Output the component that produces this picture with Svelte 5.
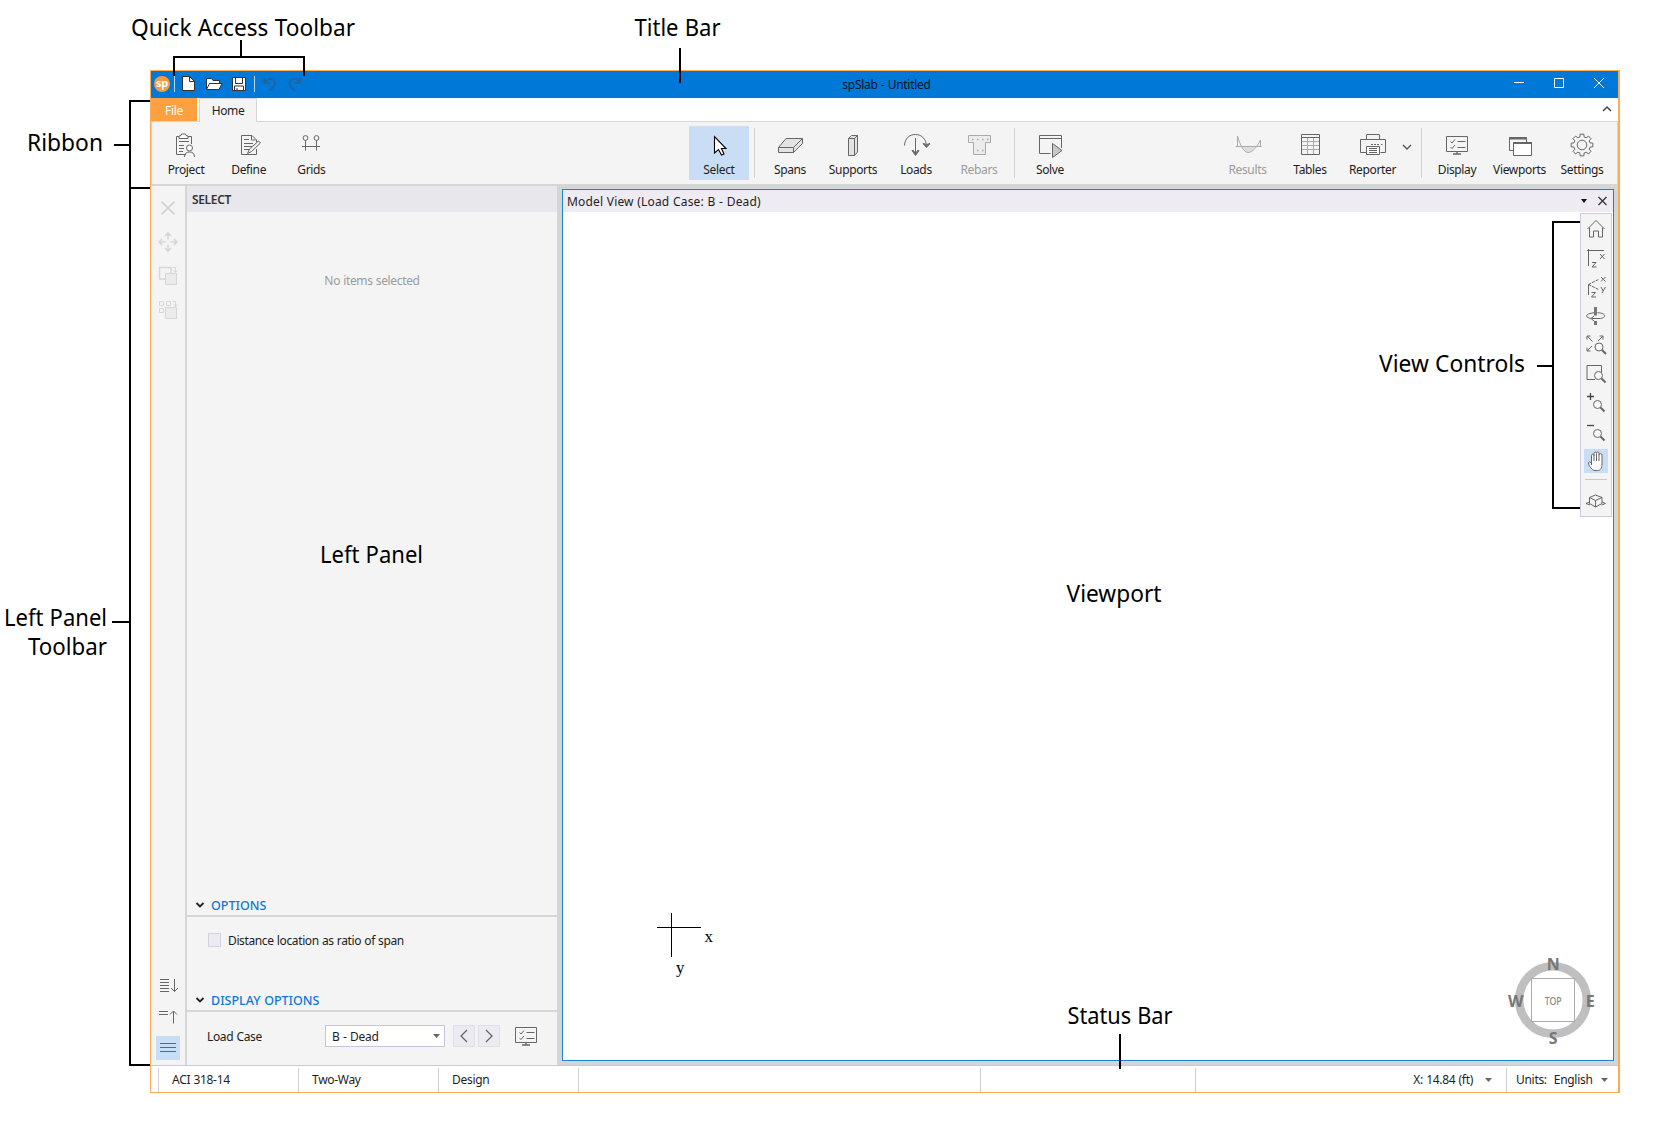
<script lang="ts">
	type Tool = { label: string; icon: string; active?: boolean; disabled?: boolean };

	const fileTools: Tool[] = [
		{ label: 'Project', icon: 'project' },
		{ label: 'Define', icon: 'define' },
		{ label: 'Grids', icon: 'grids' }
	];

	const modelTools: Tool[] = [
		{ label: 'Spans', icon: 'spans' },
		{ label: 'Supports', icon: 'supports' },
		{ label: 'Loads', icon: 'loads' },
		{ label: 'Rebars', icon: 'rebars', disabled: true }
	];

	const outputTools: Tool[] = [
		{ label: 'Results', icon: 'results', disabled: true },
		{ label: 'Tables', icon: 'tables' },
		{ label: 'Reporter', icon: 'reporter' }
	];

	const viewTools: Tool[] = [
		{ label: 'Display', icon: 'display' },
		{ label: 'Viewports', icon: 'viewports' },
		{ label: 'Settings', icon: 'settings' }
	];

	const viewControls = ['home', 'planView', 'isoView', 'rotate', 'zoomExtents', 'zoomWindow', 'zoomIn', 'zoomOut', 'pan'];

	// outline of the settings cog, eight teeth around the centre
	function gearPath(cx: number, cy: number, outer: number, inner: number) {
		const points: string[] = [];
		for (let i = 0; i < 8; i++) {
			const a = (i * Math.PI) / 4 - Math.PI / 2;
			for (const [offset, r] of [[-0.26, inner], [-0.17, outer], [0.17, outer], [0.26, inner]]) {
				points.push(`${(cx + r * Math.cos(a + offset)).toFixed(2)} ${(cy + r * Math.sin(a + offset)).toFixed(2)}`);
			}
		}
		return `M${points.join('L')}Z`;
	}

	const checklist = `<path d="M3.5 5.5h21v15h-21z"/><path d="M10 23h8M14 21v2" stroke-width="1.4"/><path d="M14.5 10.5h8M14.5 16.5h8"/><path d="M7.5 10.5l1.5 1.5 3-3.5M7.5 16l1.5 1.5 3-3.5"/>`;
	const lens = `<circle cx="15" cy="14" r="4" fill="#f8f8f8"/><path d="M18 17l4 4" stroke-width="2"/>`;

	const icons: Record<string, string> = {
		project: `<path d="M7 5.5H4.500v18H14M16 5.500h3.500V13"/><path d="M7 7.500V5l2-.5.5-1.500h4l.5 1.500 2 .5v2.500z" fill="#fff"/><path d="M7 10.500h10M7 14.500h5M7 17.500h5M7 20.500h4"/><circle cx="17.500" cy="17" r="3" fill="#fff"/><path d="M12.500 26c0-3.500 2-5 5-5s5 1.500 5 5"/>`,
		define: `<path d="M17 4.500H6.500v19h15V18M17 4.500l4.500 4.500v2M16.500 4.500v4.500h4"/><path d="M9 8.500h5M9 12.500h9M9 15.500h8M9 18.500h5"/><path d="M12.500 22.500l2-4.500 9-8 2 2-9 8.500z" fill="#eee"/>`,
		grids: `<circle cx="8.500" cy="7" r="2.400"/><circle cx="19.500" cy="7" r="2.400"/><path d="M8.500 9.500v10M19.500 9.500v10M5 15.500h18"/>`,
		select: `<path d="M9.500 5.500v16.500l4-3.500 3 5.500 2.500-1-2.500-5.500h4.500z" fill="#fff" stroke="#000" stroke-width="1.100"/>`,
		spans: `<path d="M2.500 16.500L10 7.500h16.500v5L17.500 21.500h-15z" fill="#e3e3e3"/><path d="M2.500 16.500h15v5M17.500 16.500l9-9"/>`,
		supports: `<path d="M9.500 7.500l3-3h6V21l-3 3.500h-6z" fill="#e3e3e3"/><path d="M9.500 7.500h6v17M15.500 7.500l3-3"/>`,
		loads: `<path d="M2.500 14.500C3 7 7.500 3.500 13.500 3.500S24.500 8 24.500 16M13.500 7v16"/><path d="M10 19.500h1.500l2 3.500 2-3.500H17L13.500 24.500zM21 12.500l3.500 4 3.500-4-3.500 1z" fill="#777"/>`,
		rebars: `<path d="M3.500 4.500h22v7h-5v12h-12v-12h-5z" fill="#ececec"/><path d="M7 8.500h1.500M12 8.500h1.500M17 8.500h1.500M22 8.500h1.500M12 19.500h1.500M17 19.500h1.500" stroke-width="1.600"/>`,
		solve: `<path d="M14.500 22.500h-11v-18h22V17M3.500 7.500h22"/><path d="M16.500 12.500v14l9.500-7z" fill="#c8c8c8"/>`,
		results: `<path d="M8 15.500h13c-2 4-4 6-6.500 6S10 19.500 8 15.500z" fill="#ddd" stroke="none"/><path d="M1.500 15.500h26M3.500 15.500V5c2.500 9 6.500 16.500 10.500 16.500 5 0 9-6 12.500-12.500v6.500"/>`,
		tables: `<path d="M5.500 10.500h18M5.500 14.500h18M5.500 18.500h18M11.500 7v16M17.500 7v16" stroke="#aaa"/><path d="M5.500 3.500h18v20h-18zM5.500 6.500h18" />`,
		reporter: `<path d="M7.500 8.500v-5h13v5"/><path d="M7.500 21.500h-6v-13h25v13h-5"/><path d="M7.500 15.500h13v8h-13z" fill="#fff"/><path d="M10 17.500h8M10 19.500h8M10 21.500h8"/><path d="M12 13.500h8M22 13.500h1.500" stroke-dasharray="2 1"/>`,
		display: checklist,
		viewports: `<path d="M7 19.500H3.500v-13h17V11"/><path d="M3 7.500h18" stroke-width="2"/><path d="M7.500 11.500h18v13h-18z" fill="#fff"/><path d="M7 12h19" stroke-width="2"/>`,
		settings: `<path d="${gearPath(14, 14, 11, 8.3)}"/><circle cx="14" cy="14" r="4.800"/>`,
		home: `<path d="M3.500 12L12 3.500l8.500 8.500M5.500 10.500v9.500h4v-6h5v6h4v-9.500"/>`,
		planView: `<path d="M3 4.500h17M4.500 3v17"/><path d="M16 8l4.500 5M20.500 8l-4.500 5M8 16.500h4l-4 4.500h4.500"/>`,
		isoView: `<path d="M4.500 20V9.500M7.500 17.500h4l-4 4.500h4.500"/><path d="M4.500 9.500l10-5M4.500 9.500l10 5" stroke-dasharray="3 1"/><path d="M17 2l4.500 4.500M21.500 2L17 6.500M17 12l2.200 4M21.500 12l-3.500 6"/>`,
		rotate: `<path d="M11.500 3v8.500M11.500 17v4" stroke-width="3" stroke="#777"/><path d="M7 14.500C2 14 1 10.500 6 9.500l4-.8M13.500 8.700c9 .3 9 5 3 5.800H8M10 12l-3 2.500 3 2.500"/>`,
		zoomExtents: `<path d="M3 6.500V3h3.500M3 3l5.500 5.500M15.500 3H19v3.500M19 3l-5 5M3 14.500V18h3.500M3 18l5-5"/>${lens}`,
		zoomWindow: `<path d="M17.500 10.500V3.500H3v14h8"/><g transform="translate(-.5 -.5)">${lens}</g>`,
		zoomIn: `<path d="M3 5.500h7M6.500 2v7" stroke="#444" stroke-width="1.300"/><g transform="translate(-1.500 -.5)">${lens}</g>`,
		zoomOut: `<path d="M3 5.500h7" stroke="#444" stroke-width="1.300"/><g transform="translate(-1.500 -.5)">${lens}</g>`,
		pan: `<path d="M7.500 16V6.500c0-1.800 2.500-1.800 2.500 0V4.500c0-1.800 2.500-1.800 2.500 0V4.200c0-1.800 2.500-1.800 2.500 0V6c0-1.800 3-1.800 3 0v9c0 4-1.500 6.500-4.500 6.500H11c-3 0-6.500-5-6.500-7.500 0-1.500 2-1.500 3 .5M10 6v6M12.500 5v7M15 6v6" fill="#fff"/>`,
		cube: `<path d="M5.500 8.500L11.500 6l6.500 2.500v6L11.500 18l-6-3.500zM5.500 8.500l6 3 6.500-3M11.500 11.500V18M5.500 13L2 14.500l4 1.500M18 13l3.500 1.500-4 1.500"/>`,
		remove: `<path d="M5.500 5.500l13 13M18.500 5.500l-13 13" stroke-width="1.800"/>`,
		move: `<path d="M12 9.500V3M9 6l3-3 3 3M12 14.500V21M9 18l3 3 3-3M9.500 12H3M6 9l-3 3 3 3M14.500 12H21M18 9l3 3-3 3" stroke-width="1.600"/>`,
		copy: `<path d="M9 15H3.500V3.500H15V9" stroke-width="1.400"/><path d="M9.500 9.500h11v11h-11z" fill="#ebebeb"/><path d="M16.500 3.500h3V8M17.500 6.500l2 2 2-2"/>`,
		array: `<path d="M3.500 3.500h4v4h-4zM10.500 3.500h4v4h-4zM3.500 10.500h4v4h-4z"/><path d="M9.500 9.500h11v11h-11z" fill="#ebebeb"/><path d="M16.500 3.500h3V8M17.500 6.500l2 2 2-2"/>`,
		expandAll: `<path d="M4 7.500h9M4 10.500h9M4 13.500h9M4 16.500h9M4 19.500h9M18.500 7v12.500M15 16l3.500 3.500L22 16"/>`,
		collapseAll: `<path d="M3 7.500h9M3 10.500h9M17.500 19.500V7M14 10.500L17.500 7 21 10.500"/>`,
		menu: `<path d="M4 7.500h16M4 11.500h16M4 15.500h16"/>`,
		newFile: `<path d="M4.500 2.500h7l5 5v9h-12z" fill="#fff"/><path d="M11.500 2.500v5h5"/>`,
		open: `<path d="M3.500 15.500V4.500h5l1.500 2h6.500V9" fill="#fff"/><path d="M6.500 9.500H19l-3 6H3.500z" fill="#fff"/>`,
		save: `<path d="M4.500 3.500h13v13h-13z" fill="#fff"/><path d="M7.500 3.500v6h7v-6M6.500 16.500v-4.500h9v4.500M9 16v-2"/>`,
		undo: `<path d="M5.500 3.500V9H11M5.500 9c2-3.500 5-5 8-3.500s3.500 5 1 7.500l-4 3.500" stroke="#28609a" stroke-width="1.700"/>`,
		redo: `<path d="M16 3.500V9h-5.500M16 9c-2-3.500-5-5-8-3.500s-3.500 5-1 7.500l4 3.500" stroke="#28609a" stroke-width="1.700"/>`
	};

	const cells = [
		{ text: 'ACI 318-14', width: 140 },
		{ text: 'Two-Way', width: 140 },
		{ text: 'Design', width: 140 },
		{ text: '', width: 402 },
		{ text: '', width: 215 }
	];

	const callouts = [
		{ text: 'Quick Access Toolbar', x: 131, y: 36, width: 224 },
		{ text: 'Title Bar', x: 634.5, y: 36, width: 86 },
		{ text: 'Ribbon', x: 27, y: 151, width: 76 },
		{ text: 'Left Panel', x: 4, y: 626, width: 103 },
		{ text: 'Toolbar', x: 28, y: 655, width: 79 },
		{ text: 'Left Panel', x: 320, y: 563, width: 103 },
		{ text: 'Viewport', x: 1066.5, y: 602, width: 95 },
		{ text: 'View Controls', x: 1379, y: 372, width: 146 },
		{ text: 'Status Bar', x: 1067.5, y: 1024, width: 105 }
	];
</script>

{#snippet icon(name: string, size: number)}
	<svg class="icon" width={size} height={size} viewBox="0 0 {size} {size}">{@html icons[name]}</svg>
{/snippet}

{#snippet tool(item: Tool)}
	<button class="tool" class:active={item.active} class:disabled={item.disabled}>
		{@render icon(item.icon, 28)}
		<span>{item.label}</span>
	</button>
{/snippet}

{#snippet arrow()}
	<svg class="arrow" width="7" height="4" viewBox="0 0 7 4"><path d="M0 0h7L3.500 4z" /></svg>
{/snippet}

{#snippet chevron()}
	<svg class="chevron" width="10" height="8" viewBox="0 0 10 8"><path d="M1.500 2L5 5.500 8.500 2" /></svg>
{/snippet}

<div class="page">
	<div class="window">
		<header class="titlebar">
			<div class="quick">
				<span class="logo">sp</span>
				<i></i>
				{@render icon('newFile', 20)}
				{@render icon('open', 20)}
				{@render icon('save', 20)}
				<i class="second"></i>
				{@render icon('undo', 20)}
				{@render icon('redo', 20)}
			</div>
			<span class="title">spSlab - Untitled</span>
			<svg class="controls" width="92" height="12" viewBox="0 0 92 12">
				<path d="M1 5.500h10M41.500 1.500h9v9h-9zM81 1l10 10M91 1L81 11" />
			</svg>
		</header>

		<nav class="tabs">
			<button class="file">File</button>
			<button class="home">Home</button>
			<svg class="fold" width="10" height="8" viewBox="0 0 10 8"><path d="M1 6l4-4 4 4" /></svg>
		</nav>

		<div class="ribbon">
			<div class="group">
				{#each fileTools as item}{@render tool(item)}{/each}
			</div>
			<div class="group model">
				{@render tool({ label: 'Select', icon: 'select', active: true })}
				<hr />
				{#each modelTools as item}{@render tool(item)}{/each}
				<hr />
				{@render tool({ label: 'Solve', icon: 'solve' })}
			</div>
			<div class="group output">
				{#each outputTools as item}{@render tool(item)}{/each}
				<svg class="more" width="10" height="8" viewBox="0 0 10 8"><path d="M1 2l4 4 4-4" /></svg>
				<hr />
				{#each viewTools as item}{@render tool(item)}{/each}
			</div>
		</div>

		<main class="workspace">
			<aside class="rail">
				<div class="edit">
					{@render icon('remove', 24)}
					{@render icon('move', 24)}
					{@render icon('copy', 24)}
					{@render icon('array', 24)}
				</div>
				<div class="lists">
					{@render icon('expandAll', 24)}
					{@render icon('collapseAll', 24)}
					<span class="on">{@render icon('menu', 24)}</span>
				</div>
			</aside>

			<section class="panel">
				<h2>SELECT</h2>
				<p class="empty">No items selected</p>
				<h3>{@render chevron()}OPTIONS</h3>
				<label class="check"><span class="box"></span>Distance location as ratio of span</label>
				<h3>{@render chevron()}DISPLAY OPTIONS</h3>
				<div class="loadcase">
					<span class="name">Load Case</span>
					<div class="select">B - Dead{@render arrow()}</div>
					<button class="step"><svg width="8" height="14" viewBox="0 0 8 14"><path d="M7 1L1 7l6 6" /></svg></button>
					<button class="step"><svg width="8" height="14" viewBox="0 0 8 14"><path d="M1 1l6 6-6 6" /></svg></button>
					{@render icon('display', 28)}
				</div>
			</section>

			<section class="viewport">
				<div class="viewhead">
					<span>Model View (Load Case: B - Dead)</span>
					<svg width="26" height="10" viewBox="0 0 26 10">
						<path d="M0 3h6L3 7z" />
						<path class="line" d="M17.500 1l8 8M25.500 1l-8 8" />
					</svg>
				</div>
				<div class="canvas">
					<svg class="axes" width="60" height="72" viewBox="0 0 60 72">
						<path d="M14.500 0v44M0 14.500h44" />
						<text x="47.500" y="29">x</text>
						<text x="19" y="60">y</text>
					</svg>
					<div class="viewtools">
						{#each viewControls as name}
							<button class:on={name === 'pan'}>{@render icon(name, 24)}</button>
						{/each}
						<hr />
						<button>{@render icon('cube', 24)}</button>
					</div>
					<svg class="compass" width="96" height="100" viewBox="0 0 96 100">
						<circle cx="48" cy="46" r="33.800" />
						<rect x="26.500" y="24.500" width="43" height="43" />
						<text class="top" x="48.200" y="50.500" textLength="17" lengthAdjust="spacingAndGlyphs">TOP</text>
						<text x="48" y="15.500">N</text>
						<text x="48" y="89.500">S</text>
						<text x="10.500" y="52.500">W</text>
						<text x="85" y="52.500">E</text>
					</svg>
				</div>
			</section>
		</main>

		<footer class="status">
			{#each cells as cell}
				<span class="cell" style="width: {cell.width}px">{cell.text}</span>
			{/each}
			<span class="cell coords">X: 14.84 (ft){@render arrow()}</span>
			<span class="cell units"><span>Units:</span>English{@render arrow()}</span>
		</footer>
	</div>

	<svg class="callouts" width="1653" height="1129" viewBox="0 0 1653 1129">
		<path d="M241 40v17M174 76V57h130v19M680 48v35" />
		<path d="M150 101h-20v964h20M130 188h20M114 145h16M112 622h18" />
		<path d="M1580 222h-27v286h27M1537 366h16M1120 1034v35" />
		{#each callouts as c}
			<text x={c.x} y={c.y} textLength={c.width} lengthAdjust="spacingAndGlyphs">{c.text}</text>
		{/each}
	</svg>
</div>

<style>
	:global(body) {
		background: #fff;
	}

	.page {
		position: relative;
		box-sizing: border-box;
		width: 1653px;
		height: 1129px;
		padding: 70px 33px 36px 150px;
		overflow: hidden;
		font: 12px 'Noto Sans', 'Open Sans', sans-serif;
		letter-spacing: -0.35px;
		word-spacing: 0.4px;
		color: #1e1e1e;
	}

	.page * {
		box-sizing: border-box;
	}

	button {
		padding: 0;
		border: 0;
		background: none;
		font: inherit;
		letter-spacing: inherit;
		color: inherit;
	}

	svg {
		display: block;
		flex: none;
		fill: none;
	}

	.icon {
		stroke: #666;
	}

	.window {
		display: flex;
		flex-direction: column;
		width: 1470px;
		height: 1023px;
		border: 1px solid #fbab56;
		border-right-width: 2px;
		background: #fff;
	}

	/* Title bar */
	.titlebar {
		display: grid;
		grid-template-columns: 1fr auto 1fr;
		align-items: center;
		height: 27px;
		background: #0078d7;
		color: #06121f;
	}

	.quick {
		display: flex;
		align-items: center;
		padding: 0 0 2px 3px;
	}

	.quick .icon {
		margin-right: 5px;
		stroke: #333;
	}

	.quick i {
		width: 1px;
		height: 16px;
		margin: 0 3px 0 4px;
		background: #c5d4e5;
	}

	.quick i.second {
		margin: 0 4px 0 1px;
	}

	.logo {
		width: 16px;
		height: 16px;
		border-radius: 50%;
		background: #f79a3e;
		color: #fff;
		font-size: 11px;
		font-weight: 700;
		line-height: 13px;
		text-align: center;
	}

	.title {
		padding: 0 0 1px 4px;
		letter-spacing: -0.28px;
	}

	.controls {
		justify-self: end;
		margin: 0 13px 3px 0;
		stroke: #fff;
	}

	/* Tabs */
	.tabs {
		display: flex;
		flex: none;
		height: 24px;
		border-bottom: 1px solid #d6d6d6;
	}

	.file {
		width: 46px;
		height: 23px;
		margin-right: 2px;
		padding-top: 1px;
		background: #ffa040;
		color: #fff;
	}

	.home {
		width: 58px;
		height: 24px;
		border: 1px solid #d6d6d6;
		border-bottom: 0;
		background: #f4f4f4;
	}

	.fold {
		margin: 7px 6px 0 auto;
		stroke: #444;
		stroke-width: 1.5;
	}

	/* Ribbon */
	.ribbon {
		display: flex;
		flex: none;
		height: 64px;
		padding: 4px 5px 4px 4px;
		border: solid #d6d6d6;
		border-width: 0 1px 2px;
		background: #f4f4f4;
	}

	.group {
		display: flex;
		gap: 2.7px;
	}

	.model {
		gap: 3px;
		margin-left: 347.6px;
	}

	.output {
		gap: 2.5px;
		margin-left: auto;
	}

	.group hr {
		width: 1px;
		height: 50px;
		margin: 2px 2px 0;
		border: 0;
		background: #d2d2d2;
	}

	.output hr {
		margin-right: 3px;
	}

	.tool {
		display: flex;
		flex-direction: column;
		align-items: center;
		width: 60px;
		height: 54px;
		padding-top: 5px;
	}

	.tool span {
		margin-top: 3px;
		line-height: 16px;
	}

	.tool.active {
		background: #c9def5;
	}

	.tool.disabled {
		color: #9b9b9b;
	}

	.tool.disabled .icon {
		stroke: #aaa;
	}

	.more {
		margin: 17px 4.5px 0 -3.5px;
		stroke: #555;
		stroke-width: 1.4;
	}

	/* Left panel */
	.workspace {
		display: flex;
		flex: 1;
		min-height: 0;
	}

	.rail {
		display: flex;
		flex-direction: column;
		justify-content: space-between;
		width: 36px;
		padding: 10px 0 5px 5px;
		border-right: 2px solid #d6d6d6;
		background: #f4f4f4;
	}

	.edit {
		display: grid;
		gap: 10px;
	}

	.edit .icon {
		stroke: #d6d6d6;
	}

	.lists {
		display: grid;
		gap: 8px;
	}

	.on {
		width: 24px;
		background: #c9def5;
	}

	.panel {
		display: flex;
		flex-direction: column;
		width: 370px;
		background: #f4f4f4;
	}

	h2 {
		height: 26px;
		margin: 0;
		padding-left: 5px;
		background: #e8e7ec;
		font-size: 12px;
		font-weight: 600;
		line-height: 27px;
		color: #333;
	}

	.empty {
		flex: 1;
		margin: 0;
		padding-top: 60px;
		line-height: 17px;
		text-align: center;
		color: #9b9b9b;
	}

	h3 {
		display: flex;
		align-items: center;
		height: 23px;
		margin: 0;
		padding: 1px 0 0 8px;
		border-bottom: 2px solid #d6d6d6;
		font-size: 12.5px;
		font-weight: 500;
		letter-spacing: 0;
		color: #1177d1;
	}

	.chevron {
		margin-right: 6px;
		stroke: #222;
		stroke-width: 1.8;
	}

	.check {
		display: flex;
		height: 72px;
		padding: 16px 0 0 21px;
		line-height: 16px;
		letter-spacing: -0.37px;
	}

	.box {
		width: 13px;
		height: 14px;
		margin-right: 7px;
		border: 1px solid #d3d1e2;
		background: #ecebf1;
	}

	.loadcase {
		display: flex;
		align-items: center;
		height: 53px;
		padding: 0 0 5px 20px;
	}

	.name {
		width: 118px;
	}

	.select {
		display: flex;
		align-items: center;
		justify-content: space-between;
		width: 120px;
		height: 22px;
		margin-right: 8px;
		padding: 0 4px 0 6px;
		border: 1px solid #c5c4dc;
		background: #fff;
		letter-spacing: -0.2px;
	}

	.arrow {
		fill: #666;
	}

	.step {
		display: grid;
		place-items: center;
		width: 22px;
		height: 22px;
		margin-right: 3px;
		border: 1px solid #e0dfe8;
		background: #ecebf1;
		stroke: #666;
		stroke-width: 1.3;
	}

	.loadcase .icon {
		margin: 0 0 0 9px;
	}

	/* Viewport */
	.viewport {
		display: flex;
		flex: 1;
		flex-direction: column;
		border: solid #d3d5d9;
		border-width: 3px 4px 4px 5px;
	}

	.viewhead {
		display: flex;
		align-items: center;
		justify-content: space-between;
		height: 23px;
		padding: 0 6px 0 4px;
		border: 1px solid #1a86d0;
		border-bottom: 0;
		background: #eeecf2;
		letter-spacing: 0.15px;
	}

	.viewhead svg {
		fill: #111;
	}

	.line {
		stroke: #333;
		stroke-width: 1.3;
	}

	.canvas {
		position: relative;
		flex: 1;
		border: 1px solid #1a86d0;
		border-top: 0;
		background: #fff;
	}

	.axes {
		position: absolute;
		left: 94px;
		top: 701px;
		stroke: #000;
	}

	.axes text {
		fill: #000;
		stroke: none;
		font: 17px 'Liberation Serif', serif;
	}

	.viewtools {
		position: absolute;
		top: 1px;
		right: 1px;
		display: flex;
		flex-direction: column;
		align-items: center;
		gap: 5px;
		width: 32px;
		height: 304px;
		padding-top: 3px;
		border: 1px solid #cfcde0;
		background: #f4f4f4;
	}

	.viewtools hr {
		width: 22px;
		height: 1px;
		margin: 1px 0 4px;
		border: 0;
		background: #c8c8d0;
	}

	.compass {
		position: absolute;
		right: 12px;
		bottom: 6px;
		fill: #777;
		font: 700 16px 'Noto Sans', sans-serif;
		text-anchor: middle;
	}

	.compass circle {
		fill: none;
		stroke: #bfbfbf;
		stroke-width: 8.5;
	}

	.compass rect {
		fill: #fff;
		stroke: #aaa;
	}

	.compass .top {
		fill: #888;
		font-size: 10px;
		font-weight: 500;
		letter-spacing: 0;
	}

	/* Status bar */
	.status {
		display: flex;
		flex: none;
		height: 27px;
		padding: 2px 0 0 7px;
		border-top: 1px solid #c9c8d6;
	}

	.cell {
		flex: none;
		height: 24px;
		padding-left: 13px;
		border-left: 1px solid #d0d0d8;
		line-height: 24px;
		letter-spacing: -0.3px;
	}

	.coords {
		display: flex;
		flex: 1;
		align-items: center;
		justify-content: flex-end;
		gap: 12px;
		padding-right: 14px;
	}

	.units {
		display: flex;
		align-items: center;
		width: 112px;
		padding: 0 10px 0 9px;
	}

	.units span {
		margin-right: 7px;
	}

	.units .arrow {
		margin-left: auto;
	}

	/* Labels and brackets over the window */
	.callouts {
		position: absolute;
		inset: 0;
		stroke: #000;
		stroke-width: 2;
		pointer-events: none;
	}

	.callouts text {
		fill: #000;
		stroke: none;
		font-size: 23px;
		letter-spacing: 0;
	}
</style>
